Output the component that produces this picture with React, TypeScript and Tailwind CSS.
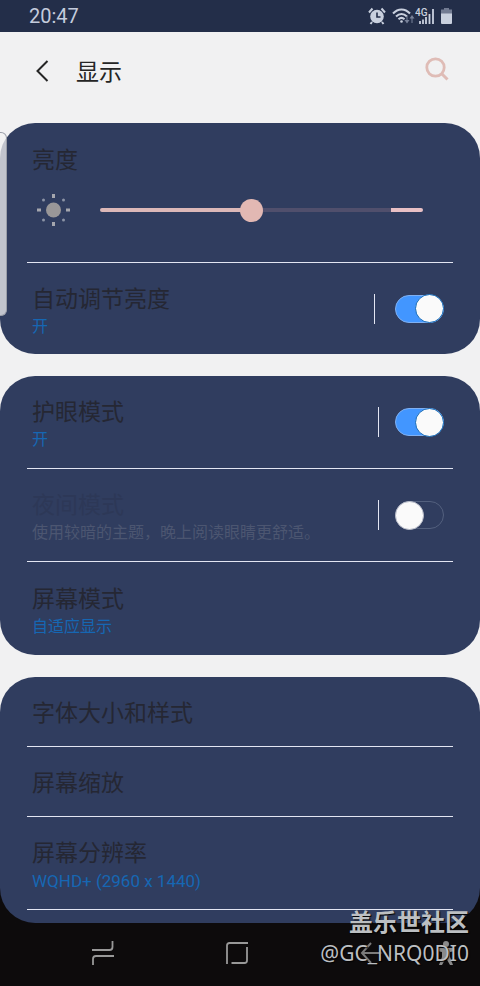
import type { ReactNode } from "react";

function StatusBar() {
  return (
    <div className="flex h-8 items-center justify-between bg-[#232e49] pr-7 pl-[29px] text-[#c3cbdc]">
      <time className="text-[20px] leading-8">20:47</time>
      <div className="flex h-5 items-center">
        <svg width="18" height="18" viewBox="0 0 18 18" role="img" aria-label="闹钟">
          <circle cx="9" cy="9.500" r="6.800" fill="#c9d0de" />
          <path d="M1 5.500 4.500 1.500M17 5.500 13.500 1.500M4 15l-1.500 2M14 15l1.500 2" stroke="#c9d0de" strokeWidth="2" />
          <path d="M9 5.500V10h3.500" fill="none" stroke="#232e49" strokeWidth="1.600" />
        </svg>
        <svg className="ml-1.5" width="23" height="18" viewBox="0 0 23 18" role="img" aria-label="Wi-Fi">
          <g fill="none" stroke="#c9d0de" strokeWidth="2">
            <path d="M1 6.500C6 1 13 1 18 6.500" />
            <path d="M4 9.500c3.500-3.500 7.500-3.500 11 0" />
            <path d="M6.500 12.200c2-1.800 4-1.800 6 0" />
          </g>
          <circle cx="9.500" cy="14.500" r="1.300" fill="#c9d0de" />
          <path d="M14.500 9v4h-2l2.500 3.500L17.500 13h-2V9zM19.500 16v-4.500h-2L20 8l2.500 3.500h-2V16z" fill="#78829a" />
        </svg>
        <svg width="20" height="18" viewBox="0 0 20 18" role="img" aria-label="4G">
          <text x="0" y="9" fontSize="10" fontWeight="500" fill="#c9d0de">4G</text>
          <path d="M5 17v-3M8 17v-4.500M11 17v-7M14.500 17V7M18 17V2" stroke="#c9d0de" strokeWidth="1.800" />
        </svg>
        <svg className="ml-1.5" width="11" height="18" viewBox="0 0 11 18" role="img" aria-label="电池">
          <path d="M0 2.500h3V1h5v1.500h3V7H0z" fill="#727b92" />
          <path d="M0 6.500h11V16q0 1-1 1H1q-1 0-1-1z" fill="#c9d0de" />
        </svg>
      </div>
    </div>
  );
}

function Header() {
  return (
    <header className="flex h-[91px] items-start justify-between pt-[21px] pr-[29px] pl-[32px]">
      <div className="flex items-center">
        <button type="button" aria-label="返回" className="flex h-8 w-5 items-center justify-center">
          <svg width="14" height="22" viewBox="0 0 14 22">
            <path d="M12.500 1 2.500 11l10 10" fill="none" stroke="#252525" strokeWidth="2" />
          </svg>
        </button>
        <h1 className="ml-6 pt-1 text-[23px] leading-8 text-[#252525]">显示</h1>
      </div>
      <button type="button" aria-label="搜索" className="flex h-8 w-7 items-center justify-center">
        <svg width="24" height="24" viewBox="0 0 24 24" fill="none" stroke="#dfbcb6">
          <circle cx="10.500" cy="10.500" r="8.700" strokeWidth="2.800" />
          <path d="m16.500 16.500 6 6" strokeWidth="3" />
        </svg>
      </button>
    </header>
  );
}

function Card({ children }: { children: ReactNode }) {
  return <section className="rounded-[35px] bg-[#303d5f] px-[27px]">{children}</section>;
}

interface RowProps {
  id: string;
  title: string;
  detail?: string;
  latin?: boolean;
  disabled?: boolean;
  checked?: boolean;
  wide?: boolean;
  last?: boolean;
}

function Row({ id, title, detail, latin, disabled, checked, wide, last }: RowProps) {
  const height = wide ? "h-[91px]" : detail ? "h-[93px]" : "h-[70px]";
  const padding = detail ? "pt-2" : "pt-1";
  const isSwitch = checked !== undefined;
  const text = (
    <>
      <span className={`block text-[23px] leading-7 ${disabled ? "text-[#2d3857]" : "text-[#252733]"}`}>{title}</span>
      {detail && (
        <span
          className={`block leading-[26px] ${latin ? "text-[17px]" : "text-[16px]"} ${disabled ? "text-[#4c5671]" : "text-[#1667b3]"}`}
        >
          {detail}
        </span>
      )}
    </>
  );
  return (
    <div className={`flex items-center justify-between pr-[9px] pl-[5px] ${height} ${last ? "" : "border-b border-[#e3e6f2]"}`}>
      {isSwitch ? (
        <>
          <label htmlFor={id} className={`flex-1 ${padding}`}>{text}</label>
          <div className={`flex h-[30px] items-center border-l border-[#e3e6f2] ${wide ? "pl-5" : "pl-4"}`}>
            <input
              id={id}
              type="checkbox"
              role="switch"
              defaultChecked={checked}
              disabled={disabled}
              className="flex h-7 w-[49px] appearance-none items-center rounded-full border border-[#53607e] before:-ml-px before:size-[29px] before:shrink-0 before:rounded-full before:border before:border-[#b9bdc9] before:bg-[#fafafa] checked:justify-end checked:border-[#7fb0f2] checked:bg-[#4296ff] checked:before:-mr-px checked:before:border-[#1269b8]"
            />
          </div>
        </>
      ) : (
        <button type="button" className={`flex-1 text-left ${padding}`}>{text}</button>
      )}
    </div>
  );
}

function Brightness() {
  return (
    <div className="h-[140px] border-b border-[#e3e6f2] pt-6 pl-[5px]">
      <label htmlFor="brightness" className="block text-[23px] leading-7 text-[#252733]">亮度</label>
      <div className="mt-[18px] flex items-center pr-[30px]">
        <svg width="34" height="34" viewBox="0 0 34 34" className="ml-[5px] shrink-0">
          <circle cx="16.500" cy="17" r="7.500" fill="#999798" />
          <path d="M16.500 1v4M16.500 29v4M0 17h4M29 17h4" stroke="#a4a6ae" strokeWidth="3" />
          <g fill="#8b93a6">
            <circle cx="6.500" cy="7" r="1.500" />
            <circle cx="26.500" cy="7" r="1.500" />
            <circle cx="6.500" cy="27" r="1.500" />
            <circle cx="26.500" cy="27" r="1.500" />
          </g>
        </svg>
        <input
          id="brightness"
          type="range"
          max={300}
          defaultValue={140}
          className="ml-[29px] h-1 min-w-0 flex-1 appearance-none rounded-full bg-[linear-gradient(to_right,#dcb8b8_47%,#504f6c_47%,#504f6c_90%,#e8c0c5_90%)] [&::-webkit-slider-thumb]:size-[23px] [&::-webkit-slider-thumb]:appearance-none [&::-webkit-slider-thumb]:rounded-full [&::-webkit-slider-thumb]:bg-[#e2b8b3]"
        />
      </div>
    </div>
  );
}

function NavBar() {
  return (
    <nav className="relative flex h-[63px] items-center bg-[#0d0b0c] pr-[42px] pb-[3px] pl-9">
      <button type="button" aria-label="最近" className="flex flex-1 justify-center">
        <svg width="22" height="24" viewBox="0 0 22 24" fill="none" stroke="#989898" strokeWidth="1.800">
          <path d="M20.500 0v6q0 3-3 3H0M1 24v-6q0-3 3-3h18" />
        </svg>
      </button>
      <button type="button" aria-label="主页" className="flex flex-1 justify-center">
        <svg width="22" height="24" viewBox="0 0 22 24" fill="none" stroke="#989898" strokeWidth="1.800">
          <path d="M1 23V4.500q0-2.500 2.500-2.500H22M21 6v13.500q0 2.500-2.500 2.500H5.500" />
        </svg>
      </button>
      <button type="button" aria-label="返回" className="flex flex-1 justify-center">
        <svg width="22" height="24" viewBox="0 0 22 24" fill="none" stroke="#7b7b7b" strokeWidth="2">
          <path d="M11 2 2 12l9 10M2 12h20" />
        </svg>
      </button>
      <button type="button" aria-label="辅助功能" className="absolute top-[18px] right-[25px]">
        <svg width="18" height="25" viewBox="0 0 18 25" fill="#8a8a8a">
          <circle cx="9" cy="3" r="3" />
          <path d="M0 7h18v3l-5 1v5l3 8h-3l-4-7-4 7H2l3-8v-5l-5-1z" />
        </svg>
      </button>
      <div className="absolute right-[11px] bottom-[19px] text-right text-[#bcbfc2] [text-shadow:1px_1px_1px_#000]">
        <p className="text-[24px] leading-8 font-bold">盖乐世社区</p>
        <p className="font-['Noto_Sans'] text-[21px] leading-7">@GC_NRQ0DI0</p>
      </div>
    </nav>
  );
}

export default function App() {
  return (
    <div className="relative min-h-screen bg-[#f1f1f2] font-[Roboto,'Noto_Sans_CJK_SC',sans-serif]">
      <StatusBar />
      <Header />
      <main className="flex flex-col gap-[22px]">
        <Card>
          <Brightness />
          <Row id="auto" title="自动调节亮度" detail="开" checked wide last />
        </Card>
        <Card>
          <Row id="eye" title="护眼模式" detail="开" checked />
          <Row id="night" title="夜间模式" detail="使用较暗的主题，晚上阅读眼睛更舒适。" checked={false} disabled />
          <Row id="mode" title="屏幕模式" detail="自适应显示" last />
        </Card>
        <div className="bg-linear-to-b from-[#f1f1f2] from-50% to-[#0d0b0c] to-50%">
          <Card>
            <Row id="font" title="字体大小和样式" />
            <Row id="zoom" title="屏幕缩放" />
            <Row id="resolution" title="屏幕分辨率" detail="WQHD+ (2960 x 1440)" latin />
            <div className="h-[13px]" />
          </Card>
        </div>
      </main>
      <NavBar />
      <div className="absolute top-[132px] left-0 h-[184px] w-[7px] rounded-r-md border border-l-0 border-[#9a9ea8] bg-[#f1f1f2]/75" />
    </div>
  );
}
